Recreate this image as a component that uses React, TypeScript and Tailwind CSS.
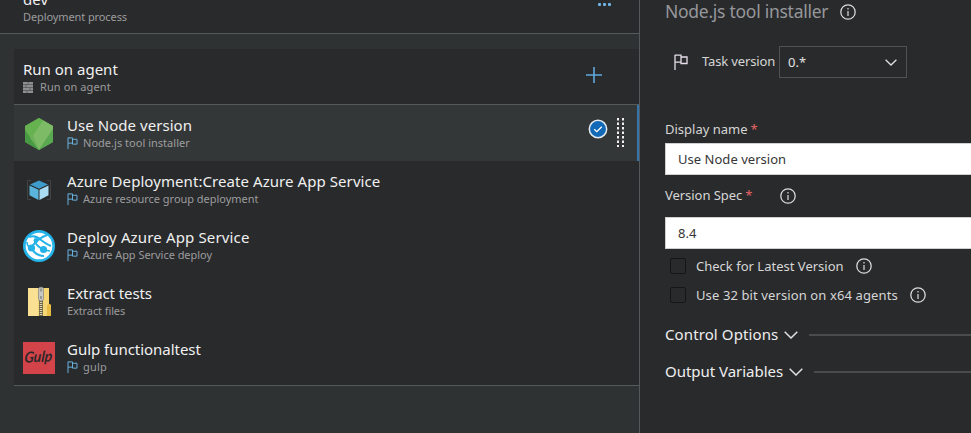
import type { ReactNode } from "react";

function Flag({ className = "" }: { className?: string }) {
  return (
    <svg className={className} viewBox="0 0 14 16" fill="none" stroke="currentColor" strokeWidth="1.3">
      <path d="M1 16V.8M1 1.200h6v7H1M7 3h6v6.500H7V8" />
    </svg>
  );
}

function Info({ className = "" }: { className?: string }) {
  return (
    <svg className={"h-4 w-4 shrink-0 text-[#dcdcdc] " + className} viewBox="0 0 16 16" fill="none" stroke="currentColor">
      <circle cx="8" cy="8" r="7.200" strokeWidth="1.250" />
      <path d="M8 7v5M8 4v1.400" strokeWidth="1.200" />
    </svg>
  );
}

function Chevron({ className = "" }: { className?: string }) {
  return (
    <svg className={"shrink-0 text-[#e0e0e0] " + className} viewBox="0 0 14 8" fill="none" stroke="currentColor" strokeWidth="1.500">
      <path d="M.7.7 7 7 13.300.7" />
    </svg>
  );
}

function NodeIcon() {
  return (
    <svg className="h-8 w-8" viewBox="0 0 32 32">
      <path d="M16 0 30 8v16L16 32 2 24V8z" fill="#5fae4b" />
      <path d="M16 0 2 8v4l5 10 13-19.700z" fill="#66b150" />
      <path d="M20 2.300 30 8v3L16 32 7 22z" fill="#7dbb66" />
      <path d="M2 12 16 32 2 24z" fill="#479a43" />
      <path d="M30 11 16 32l14-8z" fill="#5aa952" />
      <path d="m7 20 2-5 7 17z" fill="#6cb158" />
    </svg>
  );
}

function CubeIcon() {
  return (
    <svg className="h-8 w-8" viewBox="0 0 32 32">
      <path d="M8 6.500H4.500v19H8M24 6.500h3.500v19H24" fill="none" stroke="#414345" strokeWidth="1" />
      <path d="m16 6.500 9 4-9 4.300-9-4.300z" fill="#3f9bcb" />
      <path d="m6.500 11.600 9 4.200v10.200l-9-4.700z" fill="#5bb4db" />
      <path d="m25.500 11.600-9 4.200v10.200l9-4.700z" fill="#a9dcf0" />
    </svg>
  );
}

function GlobeIcon() {
  return (
    <svg className="h-8 w-8" viewBox="0 0 32 32">
      <circle cx="16" cy="16" r="16" fill="#24b3e8" />
      <circle cx="16" cy="16" r="13.300" fill="#fff" />
      <g fill="none" stroke="#24b3e8">
        <path d="M6 7c5-2 9 0 12 3 4 3 7 5 10 6" strokeWidth="2" />
        <path d="M24 5c-6 2-12 7-16 13" strokeWidth="2" />
        <path d="M12 12c2 4 5 6 9 8" strokeWidth="1.800" />
        <path d="M9 19c3 5 7 7 12 7" strokeWidth="2" />
        <path d="M4 12c0 3 1 5 4 6M21 20l6 1" strokeWidth="1.600" />
      </g>
      <circle cx="8.500" cy="18" r="3.600" fill="#24b3e8" />
      <circle cx="20.500" cy="19.500" r="3.600" fill="#24b3e8" />
      <circle cx="13" cy="10.500" r="2.400" fill="#24b3e8" />
    </svg>
  );
}

function ZipIcon() {
  return (
    <svg className="h-8 w-8" viewBox="0 0 32 32">
      <path d="M5 2h21v16l2 1v11H5z" fill="#f4d675" />
      <path d="M5 2h10v28H5z" fill="#fae093" />
      <path d="M25 18h2l1 2v10h-4V20z" fill="#e9bd45" />
      <path d="M18 14v16" stroke="#6d6546" strokeWidth="4" />
      <path d="M18 14v16" stroke="#ddd6b7" strokeWidth="2.500" strokeDasharray="1 1" />
      <rect x="15.500" y="1.300" width="5" height="13.500" rx="2" fill="#c7c7c5" stroke="#8e8b80" strokeWidth=".8" />
      <path d="M18 2.500v3M18 10v3" stroke="#77766f" strokeWidth="1.200" />
    </svg>
  );
}

function GulpIcon() {
  return (
    <svg className="h-8 w-8" viewBox="0 0 32 32">
      <path d="M0 0h32v32H0z" fill="#d2434a" />
      <text x="1.500" y="20" textLength="28" lengthAdjust="spacingAndGlyphs" transform="rotate(-3 16 16) skewX(-8) translate(2)" className="fill-[#2c2829] font-['Lato',sans-serif] text-[15px] font-bold italic">Gulp</text>
    </svg>
  );
}

function AgentIcon() {
  return (
    <svg className="h-[11px] w-[10px]" viewBox="0 0 10 11">
      <path d="M0 0h10v11H0z" fill="#8e8f90" />
      <path d="M0 2.500h10M0 5.500h10M0 8.500h10M5 0v2.500M3 2.500v3M7 5.500v3M4 8.500V11" stroke="#4f5152" strokeWidth=".7" />
    </svg>
  );
}

type Task = { icon: ReactNode; title: string; sub: string; flag: boolean; titleClass: string; subClass: string };

const tasks: Task[] = [
  { icon: <NodeIcon />, title: "Use Node version", sub: "Node.js tool installer", flag: true, titleClass: "tracking-[0.05px]", subClass: "tracking-[0.02px]" },
  { icon: <CubeIcon />, title: "Azure Deployment:Create Azure App Service", sub: "Azure resource group deployment", flag: true, titleClass: "tracking-[0.07px]", subClass: "tracking-[-0.03px]" },
  { icon: <GlobeIcon />, title: "Deploy Azure App Service", sub: "Azure App Service deploy", flag: true, titleClass: "tracking-[0.15px]", subClass: "tracking-[-0.04px]" },
  { icon: <ZipIcon />, title: "Extract tests", sub: "Extract files", flag: false, titleClass: "tracking-[-0.1px]", subClass: "tracking-[-0.1px]" },
  { icon: <GulpIcon />, title: "Gulp functionaltest", sub: "gulp", flag: true, titleClass: "tracking-[-0.03px]", subClass: "tracking-[0.2px]" },
];

function TaskRow({ task, selected }: { task: Task; selected: boolean }) {
  return (
    <div className={"flex h-14 items-center pl-[9px] " + (selected ? "border-r-2 border-[#3476ac] bg-[#343738]" : "")}>
      <div className="mt-px w-11 shrink-0">{task.icon}</div>
      <div className="flex flex-col">
        <span className={"text-[15px] leading-[19px] text-[#f0f0f0] " + task.titleClass}>{task.title}</span>
        <span className="mt-px flex h-[14px] items-center">
          {task.flag && <Flag className="mr-[5px] h-[12px] w-[11px] text-[#69b4e0]" />}
          <span className={"text-[11px] leading-[14px] text-[#9b9c9d] " + task.subClass}>{task.sub}</span>
        </span>
      </div>
      {selected && (
        <div className="mr-[13px] ml-auto flex items-center gap-[9px]">
          <svg className="mt-[-8px] h-5 w-5" viewBox="0 0 20 20">
            <circle cx="10" cy="10" r="8.700" fill="#1269b8" stroke="#e4e9ed" strokeWidth="1.500" />
            <path d="m6.200 10.200 2.600 2.500 5-5" fill="none" stroke="#fff" strokeWidth="1.300" />
          </svg>
          <svg className="mt-[-2px] h-[29px] w-[7px]" viewBox="0 0 7 29">
            <path d="M1 0v29M6 0v29" stroke="#f1f1f1" strokeWidth="2" strokeDasharray="2.500 2" />
          </svg>
        </div>
      )}
    </div>
  );
}

function TextInput({ value, className }: { value: string; className: string }) {
  return <div className={"flex h-8 items-center border border-r-0 border-[#d0d0d0] bg-white pt-px pl-3 text-[13px] text-[#363636] " + className}>{value}</div>;
}

function CheckRow({ label, className }: { label: string; className: string }) {
  return (
    <div className="flex h-[29px] items-center pl-[5px]">
      <span className="h-4 w-4 rounded-[2px] border border-[#151617]" />
      <span className={"mt-0.5 ml-[10px] text-[13px] whitespace-nowrap text-[#d6d6d6] " + className}>{label}</span>
      <Info className="ml-3" />
    </div>
  );
}

function Section({ label, className }: { label: string; className: string }) {
  return (
    <div className="flex h-[37px] items-center">
      <span className={"text-[15px] whitespace-nowrap text-[#efefef] " + className}>{label}</span>
      <Chevron className="mr-[11px] ml-[6px] h-2 w-[14px]" />
      <span className="h-0.5 flex-1 bg-[#4a4b4d]" />
    </div>
  );
}

export default function App() {
  return (
    <div className="flex h-[433px] w-[971px] overflow-hidden bg-[#292a2c] font-['Noto_Sans','Open_Sans',sans-serif]">
      <section className="flex w-[640px] shrink-0 flex-col border-r border-[#55585a] bg-[#2f3233]">
        <header className="flex h-[34px] justify-between border-b border-[#55595a] bg-[#292a2c] pl-[23px]">
          <div className="-mt-[11px] flex flex-col">
            <span className="text-[15px] leading-5 text-[#f0f0f0]">dev</span>
            <span className="text-[11px] leading-4 tracking-[-0.1px] text-[#9b9c9d]">Deployment process</span>
          </div>
          <div className="mt-[3px] mr-[28px] flex gap-[2px]">
            <span className="h-[3px] w-[3px] rounded-[1px] bg-[#70b5e6]" />
            <span className="h-[3px] w-[3px] rounded-[1px] bg-[#70b5e6]" />
            <span className="h-[3px] w-[3px] rounded-[1px] bg-[#70b5e6]" />
          </div>
        </header>
        <div className="mt-[15px] ml-[14px] flex flex-col border-b border-[#55595a] bg-[#292a2c]">
          <div className="flex h-14 items-center justify-between border-b border-[#55595a] pr-[37px] pl-[9px]">
            <div className="mt-px flex flex-col">
              <span className="text-[15px] leading-[19px] text-[#f0f0f0]">Run on agent</span>
              <span className="mt-px flex h-[14px] items-center gap-[7px]">
                <AgentIcon />
                <span className="text-[11px] leading-[14px] tracking-[0.1px] text-[#9b9c9d]">Run on agent</span>
              </span>
            </div>
            <svg className="mt-[-4px] h-4 w-4" viewBox="0 0 16 16" stroke="#5fa8dc" strokeWidth="1.600">
              <path d="M8 0v16M0 8h16" />
            </svg>
          </div>
          {tasks.map((task, i) => (
            <TaskRow key={task.title} task={task} selected={i === 0} />
          ))}
        </div>
      </section>
      <section className="flex flex-1 flex-col pl-[25px]">
        <div className="flex h-6 items-center">
          <span className="-mt-px text-[17.5px] tracking-[-0.27px] whitespace-nowrap text-[#96979a]">Node.js tool installer</span>
          <Info className="ml-3" />
        </div>
        <div className="mt-[22px] flex h-8 items-center pl-[9px]">
          <Flag className="h-4 w-[14px] text-[#e6dfe9]" />
          <span className="ml-[14px] w-[77px] text-[13px] tracking-[-0.15px] whitespace-nowrap text-[#d6d6d6]">Task version</span>
          <div className="flex h-8 w-32 items-center justify-between border border-[#505254] pr-[9px] pl-2 text-[13px] text-[#e2e2e2]">
            <span className="mt-0.5">0.*</span>
            <Chevron className="h-[7px] w-3" />
          </div>
        </div>
        <div className="mt-[38px] flex h-[27px] items-center text-[13px] text-[#d6d6d6]">
          <span>Display name</span>
          <span className="ml-[3px] text-[#e46464]">*</span>
        </div>
        <TextInput value="Use Node version" className="tracking-[0.03px]" />
        <div className="flex h-[42px] items-center text-[13px] text-[#d6d6d6]">
          <span className="tracking-[-0.05px]">Version Spec</span>
          <span className="ml-[3px] text-[#e46464]">*</span>
          <Info className="ml-[28px]" />
        </div>
        <TextInput value="8.4" className="tracking-normal" />
        <div className="mt-[2px] mb-[7px] flex flex-col">
          <CheckRow label="Check for Latest Version" className="tracking-[0.01px]" />
          <CheckRow label="Use 32 bit version on x64 agents" className="tracking-[0.11px]" />
        </div>
        <Section label="Control Options" className="tracking-[0.11px]" />
        <Section label="Output Variables" className="tracking-[-0.03px]" />
      </section>
    </div>
  );
}
